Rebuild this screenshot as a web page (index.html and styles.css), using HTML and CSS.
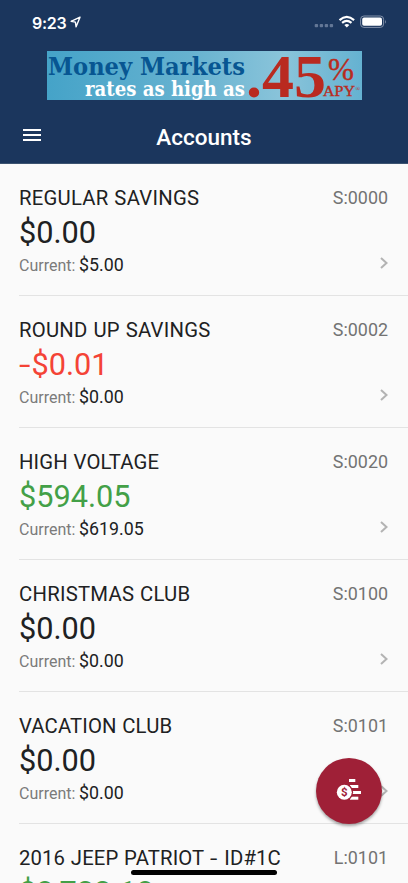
FILE: index.html
```html
<!DOCTYPE html>
<html lang="en">
<head>
<meta charset="utf-8">
<title>Accounts</title>
<meta name="viewport" content="width=device-width, initial-scale=1">
<link rel="stylesheet" href="styles.css">
</head>
<body>
<div class="screen">
  <header class="header">
    <div class="status">
      <span class="time">9:23</span>
      <svg class="location" width="11" height="12" viewBox="0 0 11 12"><path d="M10 1.2 1.1 5.3 5.4 6.1 6.1 10.8Z" fill="none" stroke="#fff" stroke-width="1.4" stroke-linejoin="round"/></svg>
      <svg class="indicators" width="73" height="14" viewBox="0 0 73 14">
        <g fill="#637796"><rect x=".7" y="9" width="3.4" height="3.2" rx="1"/><rect x="5.7" y="9" width="3.4" height="3.2" rx="1"/><rect x="10.7" y="9" width="3.4" height="3.2" rx="1"/><rect x="15.7" y="9" width="3.4" height="3.2" rx="1"/></g>
        <g fill="none" stroke="#fff" stroke-width="2.1"><path d="M25.5 5.1Q32.8-1.5 40.1 5.1"/><path d="M28.1 7.9Q32.8 3.7 37.5 7.9"/></g>
        <path d="M30.3 10Q32.8 8 35.3 10L32.8 12.5Z" fill="#fff"/>
        <rect x="46.6" y="1" width="23" height="11.4" rx="3.3" fill="none" stroke="#8291aa"/>
        <rect x="48.2" y="2.6" width="19.8" height="8.2" rx="1.8" fill="#fff"/>
        <path d="M71 4.7Q72.8 6.7 71 8.7Z" fill="#8291aa"/>
      </svg>
    </div>
    <svg class="banner" width="315" height="49" viewBox="0 0 315 49">
      <defs>
        <linearGradient id="sky" x1="0" y1="0" x2="1" y2="0">
          <stop offset="0" stop-color="#45a3c8"/><stop offset=".45" stop-color="#66b2d0"/><stop offset=".75" stop-color="#8ac4da"/><stop offset="1" stop-color="#65b2d1"/>
        </linearGradient>
      </defs>
      <rect width="315" height="49" fill="url(#sky)"/>
      <text class="slab" x="1" y="24" font-size="24.3" fill="#075692" textLength="197" lengthAdjust="spacingAndGlyphs">Money Markets</text>
      <text class="slab" x="38" y="44.7" font-size="20.5" fill="#fff" textLength="160" lengthAdjust="spacingAndGlyphs">rates as high as</text>
      <text class="rate" x="199" y="46" font-size="61" fill="#b92a20" textLength="80" lengthAdjust="spacingAndGlyphs">.45</text>
      <text class="light" x="281" y="29" font-size="31" fill="#b92a20" textLength="26" lengthAdjust="spacingAndGlyphs">%</text>
      <text class="light" x="276" y="45" font-size="15.5" fill="#b92a20" textLength="32" lengthAdjust="spacingAndGlyphs">APY</text>
      <text class="mark" x="308.5" y="40" font-size="6" fill="#b92a20">®</text>
    </svg>
    <div class="toolbar">
      <svg class="menu" width="18" height="12" viewBox="0 0 18 12"><path d="M0 1H18M0 6H18M0 11H18" stroke="#fff" stroke-width="2"/></svg>
      <h1 class="title">Accounts</h1>
    </div>
  </header>
  <main class="accounts">
    <section class="account">
      <div class="top"><h2 class="name">REGULAR SAVINGS</h2><span class="code">S:0000</span></div>
      <div class="balance">$0.00</div>
      <div class="bottom"><span class="label">Current:</span><span class="current">$5.00</span><svg class="chevron" width="8" height="12" viewBox="0 0 8 12"><path d="M1 1 6.5 6 1 11"/></svg></div>
    </section>
    <section class="account">
      <div class="top"><h2 class="name">ROUND UP SAVINGS</h2><span class="code">S:0002</span></div>
      <div class="balance negative"><span class="minus">-</span>$0.01</div>
      <div class="bottom"><span class="label">Current:</span><span class="current">$0.00</span><svg class="chevron" width="8" height="12" viewBox="0 0 8 12"><path d="M1 1 6.5 6 1 11"/></svg></div>
    </section>
    <section class="account">
      <div class="top"><h2 class="name tight">HIGH VOLTAGE</h2><span class="code">S:0020</span></div>
      <div class="balance positive">$594.05</div>
      <div class="bottom"><span class="label">Current:</span><span class="current">$619.05</span><svg class="chevron" width="8" height="12" viewBox="0 0 8 12"><path d="M1 1 6.5 6 1 11"/></svg></div>
    </section>
    <section class="account">
      <div class="top"><h2 class="name">CHRISTMAS CLUB</h2><span class="code">S:0100</span></div>
      <div class="balance">$0.00</div>
      <div class="bottom"><span class="label">Current:</span><span class="current">$0.00</span><svg class="chevron" width="8" height="12" viewBox="0 0 8 12"><path d="M1 1 6.5 6 1 11"/></svg></div>
    </section>
    <section class="account">
      <div class="top"><h2 class="name tight">VACATION CLUB</h2><span class="code">S:0101</span></div>
      <div class="balance">$0.00</div>
      <div class="bottom"><span class="label">Current:</span><span class="current">$0.00</span><svg class="chevron" width="8" height="12" viewBox="0 0 8 12"><path d="M1 1 6.5 6 1 11"/></svg></div>
    </section>
    <section class="account">
      <div class="top"><h2 class="name tight">2016 JEEP PATRIOT <span class="dash">-</span> ID#1C</h2><span class="code">L:0101</span></div>
      <div class="balance positive">$8,722.18</div>
    </section>
  </main>
  <button class="fab" aria-label="Payments">
    <svg width="26" height="24" viewBox="0 0 26 24">
      <g fill="#fff"><rect x="13" y="0" width="6.3" height="3"/><rect x="14" y="6" width="8.3" height="3"/><rect x="16" y="12" width="9" height="3"/><rect x="14" y="17.7" width="8.3" height="3"/></g>
      <circle cx="8.3" cy="13.3" r="8.8" fill="#9f2037"/><circle cx="8.3" cy="13.3" r="7.5" fill="#fff"/>
      <text class="dollar" x="8.3" y="17.3" text-anchor="middle">$</text>
    </svg>
  </button>
  <div class="home-bar"></div>
</div>
</body>
</html>
```
FILE: styles.css
```css
* { box-sizing: border-box; }
body { margin: 0; background: #fafafa; font-family: Roboto, sans-serif; color: #202122; }
.screen { position: relative; width: 408px; height: 883px; overflow: hidden; background: #fafafa; }
.header { height: 164px; background: #1b365d; border-bottom: 1px solid #3c5370; color: #fff; }
.status { display: flex; height: 51px; padding: 12px 21px 0 32px; }
.time { font: 600 16px/22px Inter, sans-serif; width: 36px; letter-spacing: -.25px; }
.location { margin: 4px 0 0 2px; }
.indicators { margin: 3px 0 0 auto; }
.banner { display: block; margin-left: 47px; }
.slab { font-family: "DejaVu Serif", serif; font-weight: 700; font-stretch: condensed; }
.rate { font-family: "Liberation Serif", serif; font-weight: 700; }
.light { font-family: "Liberation Serif", serif; stroke: #b92a20; stroke-width: .4px; }
.mark { font-family: "Liberation Serif", serif; }
.toolbar { display: grid; grid-template-columns: 60px 1fr 60px; height: 63px; padding-top: 24px; }
.menu { margin: 5px 0 0 23px; }
.title { margin: 0; text-align: center; font-size: 22.5px; line-height: 26px; font-weight: 500; }
.account { height: 132px; margin-left: 19px; padding: 20px 20px 0 0; border-bottom: 1px solid #e3e3e3; }
.top { display: flex; justify-content: space-between; height: 28px; line-height: 28px; }
.name { margin: 0; font-size: 20.3px; font-weight: 400; letter-spacing: .25px; word-spacing: .5px; white-space: nowrap; }
.name.tight { letter-spacing: .14px; }
.dash { display: inline-block; width: 9px; transform: scaleX(1.3); transform-origin: left; }
.code { font-size: 17.9px; line-height: 27px; color: #737373; }
.balance { height: 40px; font-size: 30.7px; line-height: 42px; }
.minus { display: inline-block; width: 12.5px; transform: scaleX(1.35); transform-origin: left; }
.positive { color: #43a047; }
.negative { color: #f44336; }
.bottom { display: flex; align-items: baseline; height: 26px; line-height: 26px; }
.label { font-size: 16px; color: #7b7b7b; width: 60px; }
.current { font-size: 17.8px; }
.chevron { align-self: flex-start; margin: 5px 0 0 auto; fill: none; stroke: #b3b3b3; stroke-width: 2; }
.fab { position: absolute; left: 316px; top: 758px; width: 66px; height: 66px; display: grid; place-items: center; padding: 0; border: 0; border-radius: 50%; background: #9f2037; box-shadow: 0 2px 3px rgba(0,0,0,.35); }
.dollar { font: 700 11.5px Roboto, sans-serif; fill: #9f2037; }
.home-bar { position: absolute; left: 131px; top: 870px; width: 146px; height: 5px; border-radius: 3px; background: #000; }
```
